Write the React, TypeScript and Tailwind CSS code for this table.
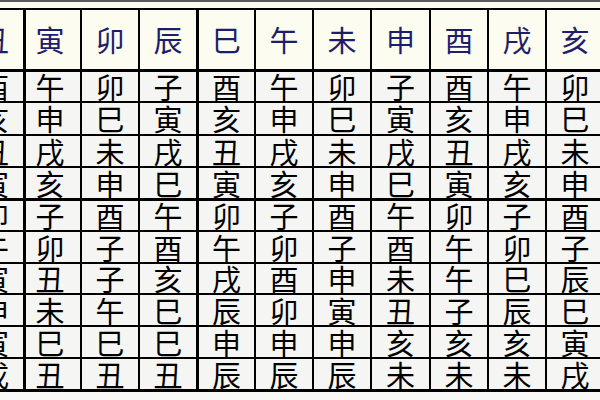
const header = ["丑", "寅", "卯", "辰", "巳", "午", "未", "申", "酉", "戌", "亥"];

const rows = [
  ["酉", "午", "卯", "子", "酉", "午", "卯", "子", "酉", "午", "卯"],
  ["亥", "申", "巳", "寅", "亥", "申", "巳", "寅", "亥", "申", "巳"],
  ["丑", "戌", "未", "戌", "丑", "戌", "未", "戌", "丑", "戌", "未"],
  ["寅", "亥", "申", "巳", "寅", "亥", "申", "巳", "寅", "亥", "申"],
  ["卯", "子", "酉", "午", "卯", "子", "酉", "午", "卯", "子", "酉"],
  ["午", "卯", "子", "酉", "午", "卯", "子", "酉", "午", "卯", "子"],
  ["寅", "丑", "子", "亥", "戌", "酉", "申", "未", "午", "巳", "辰"],
  ["申", "未", "午", "巳", "辰", "卯", "寅", "丑", "子", "辰", "巳"],
  ["寅", "巳", "巳", "巳", "申", "申", "申", "亥", "亥", "亥", "寅"],
  ["戌", "丑", "丑", "丑", "辰", "辰", "辰", "未", "未", "未", "戌"],
];

// width incl. right rule for each column
const colCls = [
  "w-[60px] border-r-[3px]",
  "w-[56px] border-r-2 pr-[6px]",
  "w-[58px] border-r-2",
  "w-[59px] border-r-[3px]",
  "w-[57px] border-r-2",
  "w-[58px] border-r-2",
  "w-[58px] border-r-2",
  "w-[59px] border-r-2",
  "w-[58px] border-r-2",
  "w-[58px] border-r-2",
  "w-[58px] border-r-2",
];

// height incl. bottom rule for each body row
const rowCls = [
  "h-[31px] border-b-2",
  "h-[33px] border-b-2",
  "h-[32px] border-b-2",
  "h-[33px] border-b-[3px]",
  "h-[31px] border-b-2",
  "h-[32px] border-b-2",
  "h-[31px] border-b-2",
  "h-[32px] border-b-2",
  "h-[32px] border-b-2",
  "h-[33px] border-b-[3px]",
];

const font = { fontFamily: '"Noto Sans CJK SC", "Noto Sans CJK JP", sans-serif' };

export default function App() {
  return (
    <div className="w-[600px] h-[400px] overflow-hidden bg-[#f8f8f6]" style={font}>
      <div className="h-[2px] bg-[#5a5a5a]" />
      <div className="h-[6px] bg-[#fbfbf2]" />
      <div className="ml-[-34px] w-[640px] border-t-2 border-black">
        <div className="flex h-[62px] border-b-[3px] border-black bg-[#fcfcf1]">
          {header.map((h, i) => (
            <div
              key={i}
              className={`${colCls[i]} shrink-0 border-black flex items-center justify-center text-[29px] leading-none font-normal text-[#1d1d6b]`}
            >
              {h}
            </div>
          ))}
        </div>
        {rows.map((r, ri) => (
          <div key={ri} className={`${rowCls[ri]} flex border-black bg-[#f5f5f3]`}>
            {r.map((c, ci) => (
              <div
                key={ci}
                className={`${colCls[ci]} shrink-0 border-black flex items-center justify-center text-[29px] leading-none font-normal text-black`}
              >
                {c}
              </div>
            ))}
          </div>
        ))}
      </div>
    </div>
  );
}
